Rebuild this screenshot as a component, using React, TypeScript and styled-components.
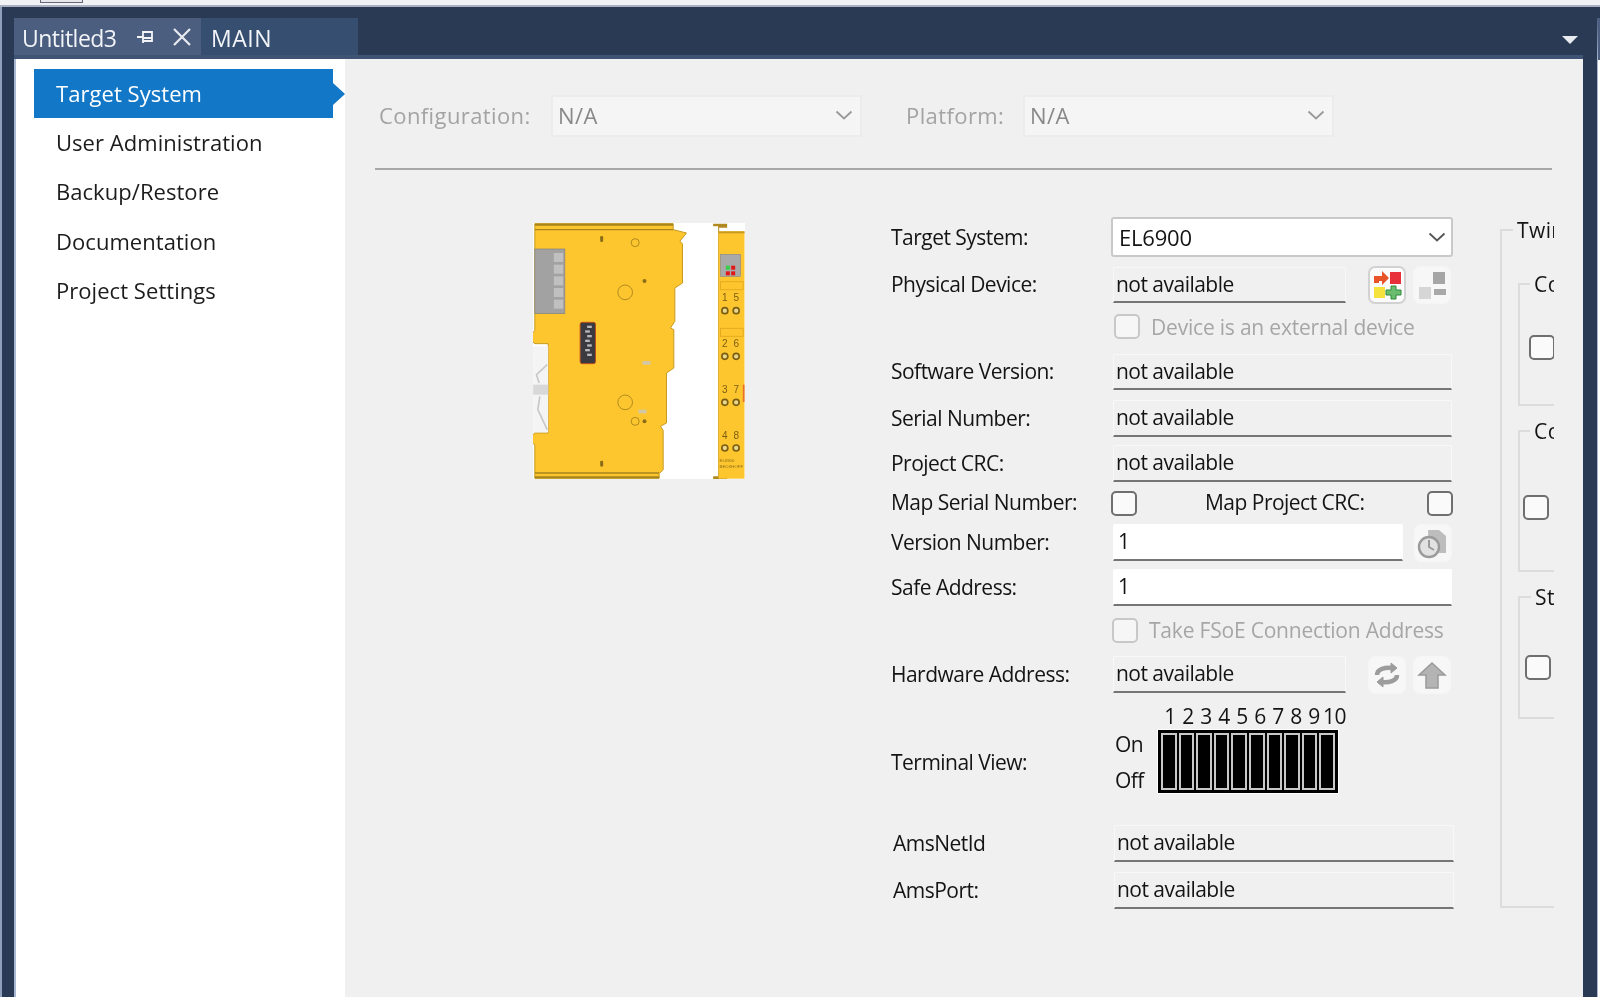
import React from "react";
import styled, { createGlobalStyle } from "styled-components";

const FONT = `"Open Sans", "Noto Sans", "Liberation Sans", sans-serif`;

const Global = createGlobalStyle`
  html, body { margin: 0; padding: 0; background: #2a3a55; }
  #root { width: 1600px; height: 997px; overflow: hidden; }
  * { box-sizing: border-box; }
`;

const Screen = styled.div`
  width: 1600px;
  height: 997px;
  display: flex;
  flex-direction: column;
  background: #2a3a55;
  font-family: ${FONT};
  font-size: 21px;
  color: #141414;
  filter: blur(0.55px);
  overflow: hidden;
`;

const TopStrip = styled.div`
  height: 7px;
  flex: none;
  background: #f1f2f5;
  border-bottom: 2px solid #aab2c2;
  padding-left: 40px;
`;

const TopTab = styled.div`
  width: 43px;
  height: 3px;
  background: #e4e6ea;
  border: 1px solid #667;
  border-top: 0;
`;

const Body = styled.div`
  flex: 1;
  min-height: 0;
  display: flex;
`;

const LeftEdge = styled.div`
  width: 14px;
  flex: none;
  border-left: 2px solid #8fa0bc;
`;

const DocWindow = styled.div`
  width: 1569px;
  flex: none;
  padding-top: 11px;
  display: flex;
  flex-direction: column;
`;

const TabStrip = styled.div`
  height: 37px;
  flex: none;
  display: flex;
  align-items: stretch;
  position: relative;
`;

const Tab = styled.div<{ $w: number; $active?: boolean }>`
  width: ${(p) => p.$w}px;
  display: flex;
  align-items: center;
  gap: 18px;
  padding: 3px 0 0 ${(p) => (p.$active ? 8 : 10)}px;
  background: ${(p) => (p.$active ? "#4b5e7f" : "#364e70")};
  color: #f2f4f8;
  font-size: 23px;
  letter-spacing: 0.5px;
`;

const TabTitle = styled.span`
  width: 96px;
  flex: none;
  letter-spacing: -0.5px;
`;

const TabIcon = styled.svg`
  flex: none;
  margin-top: -3px;
`;

const StripCaret = styled.svg`
  position: absolute;
  right: 5px;
  top: 18px;
`;

const StripRule = styled.div`
  height: 4px;
  flex: none;
  background: #3f5374;
`;

const Panel = styled.div`
  flex: 1;
  min-height: 0;
  display: flex;
  border-left: 2px solid #a9b8d0;
`;

const Sidebar = styled.nav`
  width: 329px;
  flex: none;
  background: #fff;
  padding: 10px 12px 0 18px;
  display: flex;
  flex-direction: column;
`;

const NavItem = styled.div<{ $active?: boolean }>`
  height: 49.2px;
  flex: none;
  display: flex;
  align-items: center;
  padding: 0 0 1px 22px;
  position: relative;
  font-size: 22px;
  letter-spacing: 0.05px;
  background: ${(p) => (p.$active ? "#1277c6" : "transparent")};
  color: ${(p) => (p.$active ? "#fff" : "#1c1c1c")};
  ${(p) =>
    p.$active
      ? `&::after {
          content: "";
          position: absolute;
          right: -12px;
          top: 14px;
          border-left: 12px solid #1277c6;
          border-top: 11px solid transparent;
          border-bottom: 11px solid transparent;
        }`
      : ""}
`;

const Main = styled.main`
  flex: 1;
  min-width: 0;
  background: #f0f0f0;
  padding-top: 36px;
  display: flex;
  flex-direction: column;
`;

const ConfigRow = styled.div`
  height: 42px;
  flex: none;
  display: flex;
  align-items: center;
  padding-left: 34px;
  font-size: 22px;
  letter-spacing: 0.4px;
`;

const ConfigLabel = styled.span<{ $w: number }>`
  width: ${(p) => p.$w}px;
  flex: none;
  margin-top: -2px;
  color: #a3a3a3;
`;

const ConfigSelect = styled.div<{ $mr?: number }>`
  width: 311px;
  height: 42px;
  flex: none;
  margin-right: ${(p) => p.$mr ?? 0}px;
  background: #f5f5f5;
  border: 2px solid #ececec;
  color: #888;
  padding: 0 7px 2px 5px;
  display: flex;
  align-items: center;
  justify-content: space-between;
`;

const Rule = styled.div`
  width: 1177px;
  height: 2px;
  flex: none;
  margin: 31px 0 0 30px;
  background: #a8a8a8;
`;

const Content = styled.div`
  flex: 1;
  min-height: 0;
  display: flex;
  align-items: flex-start;
  padding-top: 47px;
`;

const DevicePicture = styled.svg`
  width: 212px;
  height: 256px;
  flex: none;
  margin: 6px 0 0 188px;
  background: #fff;
`;

const Form = styled.div`
  width: 563px;
  flex: none;
  margin-left: 146px;
  display: flex;
  flex-direction: column;
  letter-spacing: -0.52px;
`;

const Row = styled.div<{ $h: number; $mt?: number; $shift?: boolean; $pb?: number }>`
  height: ${(p) => p.$h}px;
  margin-top: ${(p) => p.$mt ?? 0}px;
  flex: none;
  display: flex;
  align-items: center;
  padding-left: ${(p) => (p.$shift ? 2 : 0)}px;
  padding-bottom: ${(p) => p.$pb ?? 0}px;
`;

const Label = styled.span<{ $w?: number; $pl?: number; $raised?: boolean }>`
  width: ${(p) => p.$w ?? 222}px;
  flex: none;
  white-space: nowrap;
  padding-left: ${(p) => p.$pl ?? 0}px;
  margin-top: ${(p) => (p.$raised === false ? 0 : -2)}px;
`;

const Field = styled.div<{ $w?: number; $white?: boolean }>`
  width: ${(p) => p.$w ?? 339}px;
  height: 100%;
  flex: none;
  display: flex;
  align-items: center;
  padding: 0 0 2px ${(p) => (p.$white ? 4 : 2)}px;
  background: ${(p) => (p.$white ? "#fff" : "#f0f0f0")};
  border: 1px solid ${(p) => (p.$white ? "#fff" : "#f8f8f8")};
  border-bottom: 2px solid #757575;
  border-radius: 2px 2px 0 0;
`;

const TargetSelect = styled.div`
  width: 342px;
  height: 100%;
  flex: none;
  margin-left: -2px;
  background: #fff;
  border: 2px solid #c9c9c9;
  border-radius: 3px;
  padding: 0 5px 0 6px;
  display: flex;
  align-items: center;
  justify-content: space-between;
  font-size: 22px;
  letter-spacing: -0.2px;
`;

const ToolButton = styled.div<{ $ml: number; $enabled?: boolean }>`
  width: 38px;
  height: 38px;
  flex: none;
  margin-left: ${(p) => p.$ml}px;
  display: flex;
  align-items: center;
  justify-content: center;
  border-radius: 7px;
  background: ${(p) => (p.$enabled ? "#fbfbfb" : "#f7f7f7")};
  border: ${(p) => (p.$enabled ? "2px solid #d2d2d2" : "1px solid #f5f5f5")};
`;

const Check = styled.span<{ $off?: boolean; $ml?: number }>`
  width: 26px;
  height: 25px;
  flex: none;
  display: block;
  margin-left: ${(p) => p.$ml ?? 0}px;
  background: ${(p) => (p.$off ? "#f6f6f6" : "#fafafa")};
  border: 2px solid ${(p) => (p.$off ? "#c8c8c8" : "#6f6f6f")};
  border-radius: 5px;
`;

const CheckText = styled.span`
  margin-left: 11px;
  color: #a6a6a6;
  letter-spacing: -0.2px;
  white-space: nowrap;
`;

const TerminalGrid = styled.div`
  display: grid;
  grid-template-columns: 45px 180px;
  grid-template-rows: 22px 63px;
  row-gap: 3px;
  margin-top: 12px;
`;

const Numbers = styled.div`
  grid-column: 2;
  display: grid;
  grid-template-columns: repeat(10, 18px);
  margin-left: 3px;
  line-height: 22px;
  text-align: center;
  white-space: nowrap;
`;

const OnOff = styled.div`
  grid-column: 1;
  padding: 0 0 0 2px;
  display: flex;
  flex-direction: column;
  gap: 8px;
  line-height: 28px;
`;

const Switches = styled.div`
  grid-column: 2;
  background: #000;
  box-shadow: 0 0 0 1px #fff;
  padding: 3px 3px;
  display: grid;
  grid-template-columns: repeat(10, 1fr);
  column-gap: 2px;
`;

const SwitchCell = styled.div`
  background: #000;
  border: 2px solid #c8c8c8;
`;

const TerminalRow = styled.div`
  height: 132px;
  flex: none;
  display: flex;
  align-items: flex-start;
`;

const TerminalLabel = styled.span`
  width: 222px;
  flex: none;
  margin-top: 55px;
`;

const GroupClip = styled.div`
  width: 54px;
  flex: none;
  margin: 0 0 0 46px;
  overflow: hidden;
  padding-top: 12px;
`;

const Group = styled.div`
  height: 679px;
  width: 80px;
  position: relative;
  border: 2px solid #dcdcdc;
  border-right: 0;
  padding-top: 52px;
  display: flex;
  flex-direction: column;
  gap: 24px;
  padding-left: 16px;
`;

const Legend = styled.span<{ $left: number }>`
  position: absolute;
  left: ${(p) => p.$left}px;
  top: -14px;
  padding: 0 0 0 4px;
  background: #f0f0f0;
  line-height: 26px;
  letter-spacing: 0.4px;
  white-space: nowrap;
`;

const SubGroup = styled.div<{ $h: number; $pt: number; $pl: number }>`
  height: ${(p) => p.$h}px;
  flex: none;
  position: relative;
  border: 2px solid #dcdcdc;
  border-right: 0;
  padding: ${(p) => p.$pt}px 0 0 ${(p) => p.$pl}px;
`;

const SideSliver = styled.div`
  flex: 1;
  margin-top: 11px;
  margin-left: 14px;
  background: #fff;
  border-top: 42px solid #4b5e7f;
  border-left: 1px solid #a9b8d0;
`;

const Chevron = ({ color = "#555" }: { color?: string }) => (
  <svg width="18" height="10" viewBox="0 0 18 10" fill="none">
    <path d="M1.5 1.5 9 8.5l7.5-7" stroke={color} strokeWidth="1.8" />
  </svg>
);

const Device = () => (
  <DevicePicture viewBox="100 70 635 768">
    <path
      d="M105 72H520V90L560 100L540 125L548 132V250L525 265V365L512 385L522 390V505L500 520V670L482 680L490 692V810L478 822V836H105V735L95 728Q88 712 105 700H145V432H105Q88 420 95 402L105 393Z"
      fill="#fec62e"
      stroke="#c79a20"
      strokeWidth="3"
    />
    <path d="M105 72H520V78H105ZM105 88H520V92H105ZM105 818H478V822H105ZM105 830H478V836H105Z" fill="#a8841c" />
    <path d="M100 440h45v258H100z" fill="#f4f4f4" />
    <path d="M100 555h45v30H100z" fill="#d8d8d8" />
    <path d="M142 495l-32 30 8 25M142 690l-28-60 6-40" stroke="#c8c8c8" strokeWidth="5" fill="none" />
    <rect x="105" y="148" width="90" height="194" fill="#a2a2a2" stroke="#7e7e7e" strokeWidth="2" />
    <g fill="#c0c0c0">
      {[160, 195, 230, 265, 300].map((y) => (
        <rect key={y} x="162" y={y} width="28" height="27" />
      ))}
    </g>
    <rect x="241" y="368" width="46" height="124" rx="6" fill="#3a3a40" stroke="#b8501e" strokeWidth="3" />
    <g fill="#b9b9b9">
      {[378, 392, 406, 420, 434, 448, 462].map((y, i) => (
        <rect key={y} x={i % 2 ? 256 : 262} y={y} width="14" height="7" />
      ))}
    </g>
    <g fill="none" stroke="#b08a20" strokeWidth="3">
      <circle cx="406" cy="129" r="12" />
      <circle cx="376" cy="278" r="22" />
      <circle cx="376" cy="608" r="22" />
      <circle cx="406" cy="665" r="12" />
    </g>
    <g fill="#8a6d18">
      <circle cx="434" cy="244" r="6" />
      <circle cx="434" cy="665" r="6" />
      <rect x="301" y="109" width="9" height="18" rx="4" />
      <rect x="301" y="783" width="9" height="18" rx="4" />
    </g>
    <rect x="428" y="484" width="24" height="11" fill="#d2c8a8" />
    <rect x="416" y="630" width="24" height="11" fill="#d2c8a8" />

    <path d="M640 72h42v12h-24v742h24v12h-42v-8h15V80h-15z" fill="#b08a20" />
    <rect x="656" y="95" width="78" height="742" fill="#fec62e" />
    <rect x="656" y="95" width="78" height="6" fill="#c79a20" />
    <rect x="662" y="164" width="60" height="66" fill="#a9a9a9" stroke="#8a8a8a" strokeWidth="2" />
    <rect x="678" y="198" width="12" height="12" fill="#38d048" />
    <rect x="694" y="198" width="12" height="12" fill="#e01818" />
    <rect x="678" y="215" width="12" height="12" fill="#e01818" />
    <rect x="694" y="215" width="12" height="12" fill="#e01818" />
    <g fill="#7a5e12" fontFamily="Liberation Sans, sans-serif" fontSize="30" textAnchor="middle">
      <text x="675" y="305">1</text>
      <text x="709" y="305">5</text>
      <text x="675" y="443">2</text>
      <text x="709" y="443">6</text>
      <text x="675" y="580">3</text>
      <text x="709" y="580">7</text>
      <text x="675" y="719">4</text>
      <text x="709" y="719">8</text>
    </g>
    <g fill="#e9d58c" stroke="#7a5e12" strokeWidth="5">
      {[333, 470, 608, 745].map((y) => (
        <React.Fragment key={y}>
          <circle cx="675" cy={y} r="9" />
          <circle cx="709" cy={y} r="9" />
        </React.Fragment>
      ))}
    </g>
    <g fill="none" stroke="#e5ab1e" strokeWidth="3">
      <rect x="662" y="246" width="68" height="24" />
      <rect x="662" y="386" width="68" height="24" />
    </g>
    <rect x="729" y="555" width="5" height="52" fill="#e8702a" />
    <g fill="#8a6d18" fontFamily="Liberation Sans, sans-serif" fontSize="13">
      <text x="659" y="788">EL6900</text>
      <text x="659" y="806">BECKHOFF</text>
    </g>
  </DevicePicture>
);

const AddDeviceIcon = () => (
  <svg width="30" height="30" viewBox="0 0 30 30">
    <path d="M2 13V6h8V1l7 7-7 7v-4H7v2z" fill="#e8532a" />
    <rect x="18" y="2" width="11" height="12" fill="#e8303a" />
    <rect x="2" y="17" width="11" height="11" fill="#f6e23c" />
    <path d="M19 16h5v4h5v5h-5v4h-5v-4h-5v-5h5z" fill="#6cbc6e" stroke="#2f8a3a" strokeWidth="1" />
  </svg>
);

const GridIcon = () => (
  <svg width="30" height="30" viewBox="0 0 30 30">
    <rect x="16" y="2" width="12" height="12" fill="#a6a6a6" />
    <rect x="2" y="17" width="12" height="12" fill="#d6d6d6" />
    <rect x="17" y="19" width="12" height="6" fill="#a9a9a9" />
  </svg>
);

const ClockIcon = () => (
  <svg width="32" height="32" viewBox="0 0 32 32">
    <path d="M11 3h11l7 6v17H12z" fill="#bdbdbd" />
    <circle cx="12" cy="20" r="10" fill="#e2e2e2" stroke="#9a9a9a" strokeWidth="2.4" />
    <path d="M12 13v7l5 3" stroke="#9a9a9a" strokeWidth="2" fill="none" />
  </svg>
);

const RefreshIcon = () => (
  <svg width="30" height="30" viewBox="0 0 30 30" fill="none" stroke="#9c9c9c" strokeWidth="4.5">
    <path d="M5 15c0-6 8-8 16-7" />
    <path d="M19 3l6 5-6 5z" fill="#9c9c9c" strokeWidth="1" />
    <path d="M25 15c0 6-8 8-16 7" />
    <path d="M11 17l-6 5 6 5z" fill="#9c9c9c" strokeWidth="1" />
  </svg>
);

const UploadIcon = () => (
  <svg width="30" height="30" viewBox="0 0 30 30">
    <path d="M15 3 28 15h-7v13H9V15H2z" fill="#b4b4b4" stroke="#9a9a9a" strokeWidth="1.5" />
  </svg>
);

const NAV = ["Target System", "User Administration", "Backup/Restore", "Documentation", "Project Settings"];

export default function App() {
  return (
    <Screen>
      <Global />
      <TopStrip>
        <TopTab />
      </TopStrip>
      <Body>
        <LeftEdge />
        <DocWindow>
          <TabStrip>
            <Tab $w={187} $active>
              <TabTitle>Untitled3</TabTitle>
              <TabIcon width="18" height="16" viewBox="0 0 18 16" fill="none" stroke="#f2f4f8" strokeWidth="1.8">
                <path d="M1 8h6M7 2v12M7 3h9v9H7M7 9h9" />
              </TabIcon>
              <TabIcon width="20" height="20" viewBox="0 0 20 20" fill="none" stroke="#e8ebf0" strokeWidth="2.2">
                <path d="M2 2l16 16M18 2 2 18" />
              </TabIcon>
            </Tab>
            <Tab $w={157}>MAIN</Tab>
            <StripCaret width="16" height="8" viewBox="0 0 16 8">
              <path d="M0 0h16L8 8z" fill="#e8ebf0" />
            </StripCaret>
          </TabStrip>
          <StripRule />
          <Panel>
            <Sidebar>
              {NAV.map((n, i) => (
                <NavItem key={n} $active={i === 0}>
                  {n}
                </NavItem>
              ))}
            </Sidebar>
            <Main>
              <ConfigRow>
                <ConfigLabel $w={172}>Configuration:</ConfigLabel>
                <ConfigSelect $mr={44}>
                  N/A
                  <Chevron color="#999" />
                </ConfigSelect>
                <ConfigLabel $w={117}>Platform:</ConfigLabel>
                <ConfigSelect>
                  N/A
                  <Chevron color="#999" />
                </ConfigSelect>
              </ConfigRow>
              <Rule />
              <Content>
                <Device />
                <Form>
                  <Row $h={40}>
                    <Label $raised={false}>Target System:</Label>
                    <TargetSelect>
                      EL6900
                      <Chevron />
                    </TargetSelect>
                  </Row>
                  <Row $h={36} $mt={10}>
                    <Label>Physical Device:</Label>
                    <Field $w={233}>not available</Field>
                    <ToolButton $ml={22} $enabled>
                      <AddDeviceIcon />
                    </ToolButton>
                    <ToolButton $ml={7}>
                      <GridIcon />
                    </ToolButton>
                  </Row>
                  <Row $h={51} $pb={4}>
                    <Label>&nbsp;</Label>
                    <Check $off $ml={1} />
                    <CheckText>Device is an external device</CheckText>
                  </Row>
                  <Row $h={36}>
                    <Label>Software Version:</Label>
                    <Field>not available</Field>
                  </Row>
                  <Row $h={37} $mt={10}>
                    <Label>Serial Number:</Label>
                    <Field>not available</Field>
                  </Row>
                  <Row $h={37} $mt={8}>
                    <Label>Project CRC:</Label>
                    <Field>not available</Field>
                  </Row>
                  <Row $h={42}>
                    <Label>Map Serial Number:</Label>
                    <Check $ml={-2} />
                    <Label $w={290} $pl={68}>
                      Map Project CRC:
                    </Label>
                    <Check />
                  </Row>
                  <Row $h={37}>
                    <Label>Version Number:</Label>
                    <Field $w={290} $white>
                      1
                    </Field>
                    <ToolButton $ml={11}>
                      <ClockIcon />
                    </ToolButton>
                  </Row>
                  <Row $h={37} $mt={8}>
                    <Label>Safe Address:</Label>
                    <Field $white>1</Field>
                  </Row>
                  <Row $h={50} $pb={2}>
                    <Label>&nbsp;</Label>
                    <Check $off $ml={-1} />
                    <CheckText>Take FSoE Connection Address</CheckText>
                  </Row>
                  <Row $h={37}>
                    <Label>Hardware Address:</Label>
                    <Field $w={233}>not available</Field>
                    <ToolButton $ml={22}>
                      <RefreshIcon />
                    </ToolButton>
                    <ToolButton $ml={7}>
                      <UploadIcon />
                    </ToolButton>
                  </Row>
                  <TerminalRow>
                    <TerminalLabel>Terminal View:</TerminalLabel>
                    <TerminalGrid>
                      <Numbers>
                        {[1, 2, 3, 4, 5, 6, 7, 8, 9, 10].map((n) => (
                          <span key={n}>{n}</span>
                        ))}
                      </Numbers>
                      <OnOff>
                        <span>On</span>
                        <span>Off</span>
                      </OnOff>
                      <Switches>
                        {Array.from({ length: 10 }, (_, i) => (
                          <SwitchCell key={i} />
                        ))}
                      </Switches>
                    </TerminalGrid>
                  </TerminalRow>
                  <Row $h={37} $shift>
                    <Label $w={221}>AmsNetId</Label>
                    <Field $w={340}>not available</Field>
                  </Row>
                  <Row $h={37} $mt={10} $shift>
                    <Label $w={221}>AmsPort:</Label>
                    <Field $w={340}>not available</Field>
                  </Row>
                </Form>
                <GroupClip>
                  <Group>
                    <Legend $left={11}>TwinSAFE</Legend>
                    <SubGroup $h={123} $pt={50} $pl={9}>
                      <Legend $left={10}>Connection</Legend>
                      <Check />
                    </SubGroup>
                    <SubGroup $h={142} $pt={63} $pl={3}>
                      <Legend $left={10}>Connection</Legend>
                      <Check />
                    </SubGroup>
                    <SubGroup $h={123} $pt={57} $pl={5}>
                      <Legend $left={11}>State</Legend>
                      <Check />
                    </SubGroup>
                  </Group>
                </GroupClip>
              </Content>
            </Main>
          </Panel>
        </DocWindow>
        <SideSliver />
      </Body>
    </Screen>
  );
}
